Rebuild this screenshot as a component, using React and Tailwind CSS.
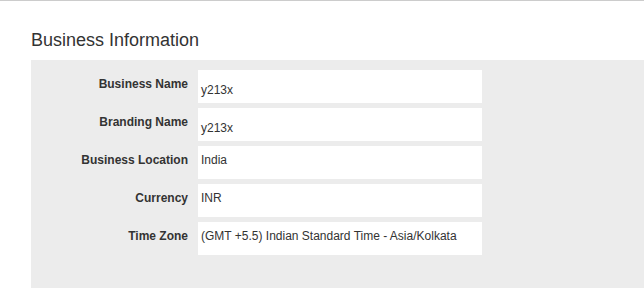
import React from "react";

const fields = [
    { label: "Business Name", value: "y213x", input: true },
    { label: "Branding Name", value: "y213x", input: true },
    { label: "Business Location", value: "India" },
    { label: "Currency", value: "INR" },
    { label: "Time Zone", value: "(GMT +5.5) Indian Standard Time - Asia/Kolkata" },
];

export default function App() {
    return (
        <div className="min-h-[288px] bg-white border-t border-[#cccccc] font-['Liberation_Sans',Arial,sans-serif] text-[#333333]">
            <h2 className="pl-[31px] pt-[27px] h-[59px] text-[18px] leading-[24px]">Business Information</h2>
            <div className="ml-[31px] bg-[#ececec] pt-[10px] pb-[40px] flex flex-col gap-[5px]">
                {fields.map((f) => (
                    <div key={f.label} className="flex">
                        <label className="w-[157px] pr-0 pt-[7px] text-right text-[12px] leading-[15px] font-bold">
                            {f.label}
                        </label>
                        <div
                            className={
                                "ml-[10px] w-[284px] h-[33px] bg-white pl-[3px] text-[12px] leading-[15px] " +
                                (f.input ? "pt-[13px]" : "pt-[7px]")
                            }
                        >
                            {f.value}
                        </div>
                    </div>
                ))}
            </div>
        </div>
    );
}
